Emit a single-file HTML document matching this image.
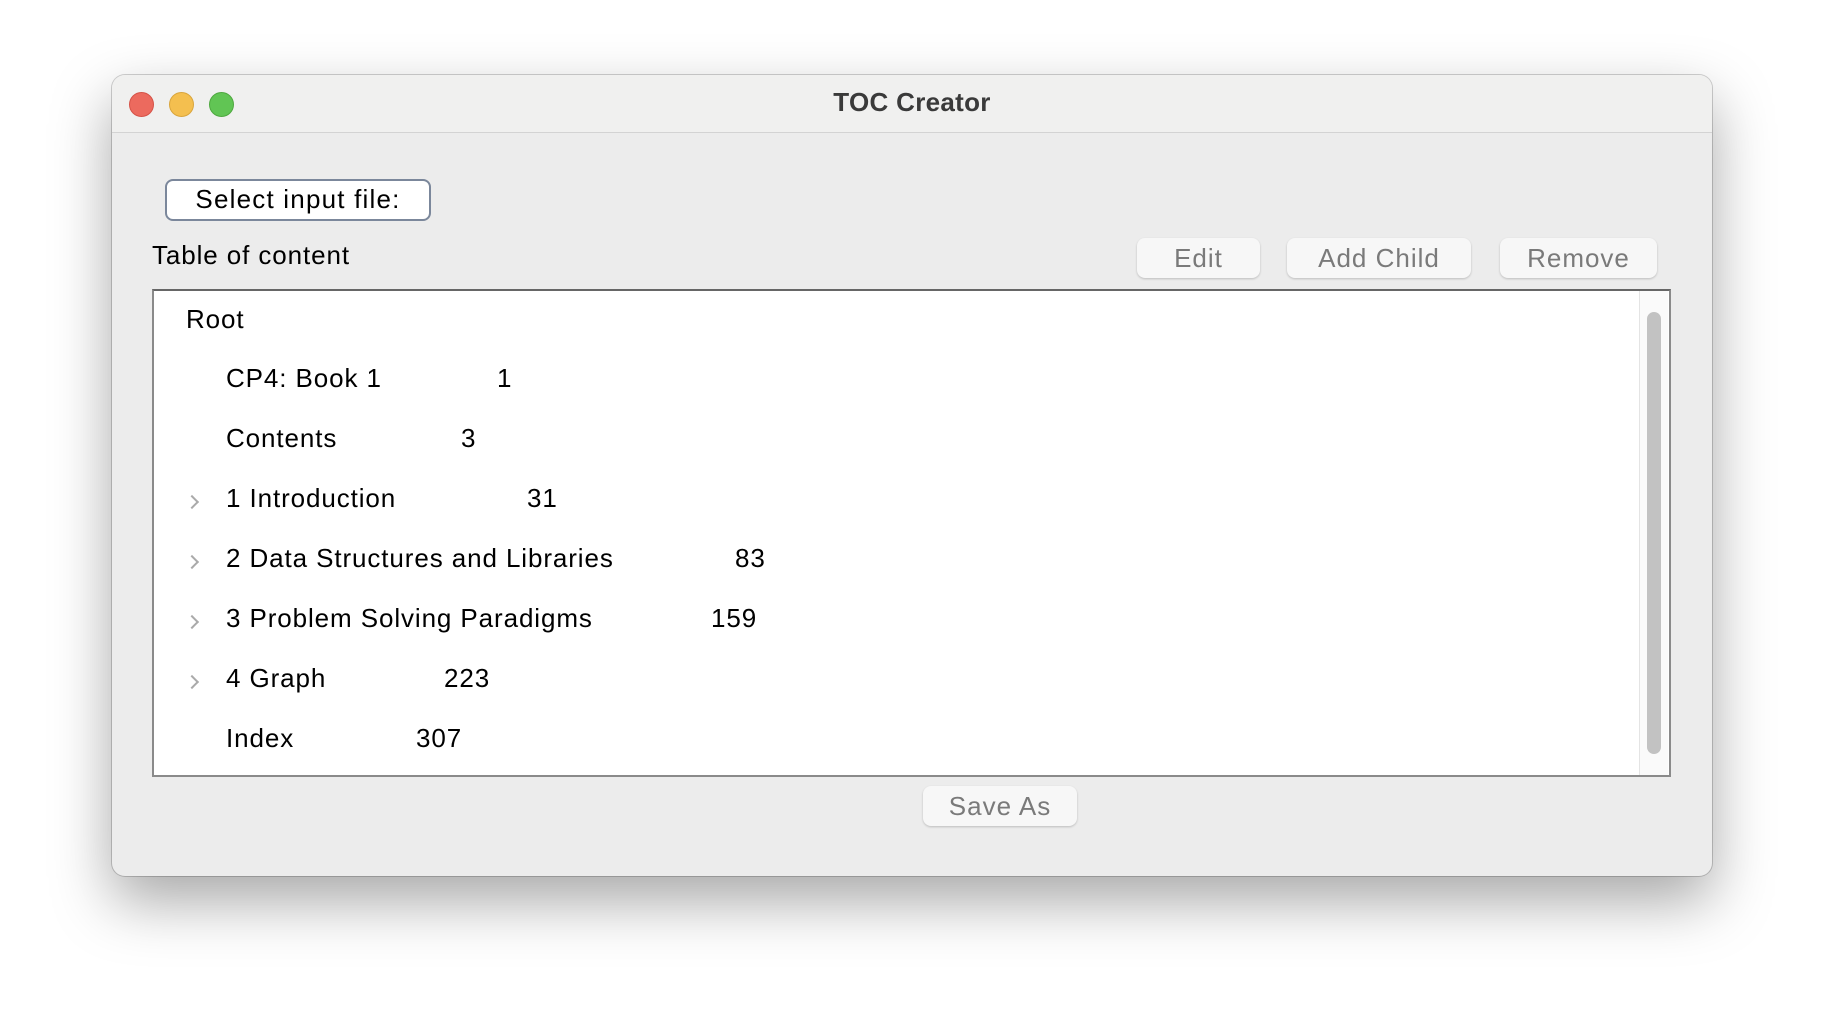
<!DOCTYPE html>
<html><head><style>
body{margin:0;width:1824px;height:1024px;background:#fff;position:relative;overflow:hidden;font-family:"Liberation Sans",sans-serif;}
.win{position:absolute;left:112px;top:75px;width:1600px;height:801px;background:#ececec;border-radius:13px;box-shadow:0 25px 60px rgba(0,0,0,.35),0 0 0 1px rgba(0,0,0,.18);overflow:hidden;}
.tb{position:absolute;left:0;top:0;right:0;height:57px;background:#f0f0ef;border-bottom:1px solid #d3d3d3;}
.dot{position:absolute;top:17px;width:23px;height:23px;border-radius:50%;}
.title{position:absolute;left:0;right:0;top:12px;text-align:center;font-weight:bold;font-size:26px;color:#3a3a3a;letter-spacing:0.3px}
.abs{position:absolute;}
.t{position:absolute;font-size:26px;color:#000;line-height:30px;white-space:nowrap;letter-spacing:0.9px}
.btn{position:absolute;background:#f7f7f7;border-radius:8px;box-shadow:0 1px 2px rgba(0,0,0,.2);color:#7a7a7a;font-size:26px;letter-spacing:1px;text-align:center;}
.chev{position:absolute;width:8px;height:8px;border-right:2px solid #aaa;border-top:2px solid #aaa;transform:rotate(45deg);}
</style></head><body>
<div class="win">
 <div class="tb">
  <div class="dot" style="left:17px;background:#ec6a5e;border:1px solid #d55247"></div>
  <div class="dot" style="left:57px;background:#f4bf4f;border:1px solid #d9a53c"></div>
  <div class="dot" style="left:97px;background:#61c554;border:1px solid #4ea83f"></div>
  <div class="title">TOC Creator</div>
 </div>
 <div class="abs" style="left:53px;top:104px;width:262px;height:38px;background:#fff;border:2px solid #7b879b;border-radius:8px;font-size:26px;letter-spacing:1.2px;text-align:center;line-height:37px;">Select input file:</div>
 <div class="t" style="left:40px;top:165px">Table of content</div>
 <div class="btn" style="left:1025px;top:163px;width:123px;height:40px;line-height:40px">Edit</div>
 <div class="btn" style="left:1175px;top:163px;width:184px;height:40px;line-height:40px">Add Child</div>
 <div class="btn" style="left:1388px;top:163px;width:157px;height:40px;line-height:40px">Remove</div>
 <div class="abs" style="left:40px;top:214px;width:1515px;height:484px;background:#fff;border:2px solid #8a8a8a;border-top-color:#666;"></div>
 <div class="abs" style="left:1527px;top:216px;width:28px;height:484px;background:#fafafa;border-left:1px solid #e4e4e4"></div>
 <div class="abs" style="left:1535px;top:237px;width:14px;height:442px;background:#c2c2c2;border-radius:7px"></div>
 <div class="btn" style="left:811px;top:711px;width:154px;height:40px;line-height:40px">Save As</div>
</div>
<div class="t" style="left:186px;top:304px">Root</div>
<div class="t" style="left:226px;top:363px">CP4: Book 1</div><div class="t" style="left:497px;top:363px">1</div>
<div class="t" style="left:226px;top:423px">Contents</div><div class="t" style="left:461px;top:423px">3</div>
<div class="chev" style="left:187px;top:497px"></div>
<div class="t" style="left:226px;top:483px">1 Introduction</div><div class="t" style="left:527px;top:483px">31</div>
<div class="chev" style="left:187px;top:557px"></div>
<div class="t" style="left:226px;top:543px">2 Data Structures and Libraries</div><div class="t" style="left:735px;top:543px">83</div>
<div class="chev" style="left:187px;top:617px"></div>
<div class="t" style="left:226px;top:603px">3 Problem Solving Paradigms</div><div class="t" style="left:711px;top:603px">159</div>
<div class="chev" style="left:187px;top:677px"></div>
<div class="t" style="left:226px;top:663px">4 Graph</div><div class="t" style="left:444px;top:663px">223</div>
<div class="t" style="left:226px;top:723px">Index</div><div class="t" style="left:416px;top:723px">307</div>
</body></html>
